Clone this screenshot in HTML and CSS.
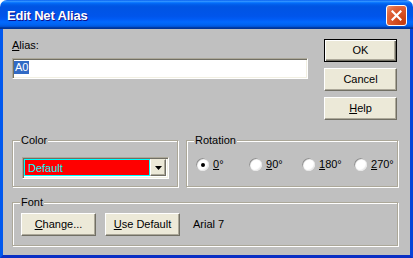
FILE: index.html
```html
<!DOCTYPE html>
<html lang="en">
<head>
    <meta charset="UTF-8">
    <title>Edit Net Alias</title>
    <link rel="stylesheet" href="styles.css">
</head>
<body>
    <div class="window">
        <div class="titlebar">
            <span class="title">Edit Net Alias</span>
            <button class="close" aria-label="Close">
                <svg width="11" height="11" viewBox="0 0 11 11">
                    <path d="M1.5 1.5 L9.5 9.5 M9.5 1.5 L1.5 9.5" stroke="#fff" stroke-width="2.2" stroke-linecap="square"/>
                </svg>
            </button>
        </div>

        <div class="client">
            <div class="top-row">
                <div class="alias">
                    <label class="alias-label"><u>A</u>lias:</label>
                    <div class="textbox"><span class="selected">A0</span></div>
                </div>
                <div class="actions">
                    <button class="btn btn-default">OK</button>
                    <button class="btn">Cancel</button>
                    <button class="btn"><u>H</u>elp</button>
                </div>
            </div>

            <div class="groups">
                <fieldset class="group color-group">
                    <legend>Color</legend>
                    <div class="group-body">
                        <div class="combo">
                            <div class="combo-field">Default</div>
                            <div class="combo-btn">
                                <svg width="7" height="4" viewBox="0 0 7 4"><path d="M0 0 H7 L3.5 4 Z" fill="#000"/></svg>
                            </div>
                        </div>
                    </div>
                </fieldset>

                <fieldset class="group rotation-group">
                    <legend>Rotation</legend>
                    <div class="group-body radios">
                        <label class="radio checked"><span class="dot"></span><span><u>0</u>°</span></label>
                        <label class="radio"><span class="dot"></span><span><u>9</u>0°</span></label>
                        <label class="radio"><span class="dot"></span><span><u>1</u>80°</span></label>
                        <label class="radio"><span class="dot"></span><span><u>2</u>70°</span></label>
                    </div>
                </fieldset>
            </div>

            <fieldset class="group font-group">
                <legend>Font</legend>
                <div class="group-body font-row">
                    <button class="btn btn-wide"><u>C</u>hange...</button>
                    <button class="btn btn-wide"><u>U</u>se Default</button>
                    <span class="font-name">Arial 7</span>
                </div>
            </fieldset>
        </div>
    </div>
</body>
</html>
```

FILE: styles.css
```css
* {
    margin: 0;
    padding: 0;
    box-sizing: border-box;
}

body {
    background: #fff;
    font-family: "Liberation Sans", Arial, sans-serif;
    font-size: 11px;
    line-height: 13px;
    color: #000;
}

u {
    text-decoration: underline;
    text-underline-offset: 1px;
}

.window {
    width: 413px;
    height: 258px;
    display: flex;
    flex-direction: column;
}

/* title bar */
.titlebar {
    height: 29px;
    flex: none;
    display: flex;
    align-items: center;
    justify-content: space-between;
    padding: 1px 6px 0 7px;
    border-radius: 7px 7px 0 0;
    background: linear-gradient(to bottom, #0058ee 0%, #3593ff 4%, #288eff 6%, #127dff 8%, #036ffc 10%, #0262ee 14%, #0057e5 20%, #0054e3 24%, #0055eb 56%, #005bf5 66%, #026afe 76%, #0062ef 86%, #0052d6 92%, #0040ab 94%, #003092 100%);
}

.title {
    color: #fff;
    font-weight: bold;
    font-size: 13px;
    letter-spacing: -0.2px;
    text-shadow: 1px 1px #0f1089;
}

.close {
    width: 21px;
    height: 21px;
    display: flex;
    align-items: center;
    justify-content: center;
    border: 1px solid #fff;
    border-radius: 3px;
    background: radial-gradient(circle at 85% 85%, #c53c0f 0%, #d9552a 50%, #e2693f 75%, #ee9a7c 100%);
}

/* client area */
.client {
    flex: 1;
    background: #c0c0c0;
    border: 3px solid #0844d8;
    border-top: 0;
    border-left-color: #0058ee;
    border-bottom-color: #0a2fc4;
    padding: 10px 12px 0 9px;
}

.top-row {
    display: flex;
    justify-content: space-between;
}

.alias {
    width: 296px;
}

.alias-label {
    display: block;
    height: 13px;
    margin-bottom: 6px;
}

.textbox {
    height: 21px;
    background: #fff;
    border: 1px solid;
    border-color: #aca899 #fff #fff #aca899;
    box-shadow: inset 1px 1px #716f64, inset -1px -1px #f1efe2;
    padding: 2px 0 0 1px;
}

.selected {
    display: inline-block;
    background: #316ac5;
    color: #fff;
    padding: 0 1px;
    height: 13px;
}

.actions {
    display: flex;
    flex-direction: column;
    gap: 6px;
    margin-right: 1px;
}

.btn {
    width: 73px;
    height: 23px;
    font: inherit;
    color: #000;
    background: #ece9d8;
    border: 1px solid;
    border-color: #fff #716f64 #716f64 #fff;
    box-shadow: inset -1px -1px #aca899;
}

.btn-default {
    border-color: #000;
    box-shadow: inset 1px 1px #fff, inset -1px -1px #716f64, inset -2px -2px #aca899;
}

.btn-wide {
    width: 75px;
}

/* group boxes */
.groups {
    display: flex;
    gap: 8px;
    margin-top: 14px;
}

.group {
    flex: none;
    min-width: 0;
    border: 1px solid #aca899;
    box-shadow: inset 1px 1px #fff, 1px 1px #fff;
    padding: 0;
}

.group legend {
    margin-left: 7px;
    padding: 0 1px;
    background: #c0c0c0;
    line-height: 13px;
}

.color-group {
    width: 166px;
    height: 53px;
}

.rotation-group {
    width: 212px;
    height: 53px;
}

.font-group {
    width: 386px;
    height: 50px;
    margin-top: 9px;
}

.group-body {
    padding: 10px 0 0 9px;
}

/* combo box */
.combo {
    width: 147px;
    height: 22px;
    display: flex;
    border: 1px solid;
    border-color: #aca899 #fff #fff #aca899;
    box-shadow: inset 1px 1px #716f64, inset -1px -1px #f1efe2;
    padding: 1px 2px 2px 1px;
    background: #fff;
}

.combo-field {
    flex: 1;
    background: #ff0000;
    border: 1px solid #00ffff;
    color: #00ffff;
    padding: 2px 0 0 3px;
}

.combo-btn {
    width: 16px;
    display: flex;
    align-items: center;
    justify-content: center;
    background: #ece9d8;
    border: 1px solid;
    border-color: #ece9d8 #716f64 #716f64 #fff;
    box-shadow: inset -1px -1px #aca899;
}

/* radios */
.radios {
    display: grid;
    grid-template-columns: 53px 53px 52px auto;
    padding-top: 11px;
}

.radio {
    display: flex;
    align-items: center;
    gap: 4px;
}

.dot {
    width: 13px;
    height: 13px;
    border-radius: 50%;
    background: #fff;
    box-shadow: inset 1px 1px 1px #8a8a8a, inset -1px -1px 1px #e8e8e8;
    display: flex;
    align-items: center;
    justify-content: center;
}

.radio.checked .dot::after {
    content: "";
    width: 4px;
    height: 4px;
    border-radius: 50%;
    background: #000;
}

/* font row */
.font-row {
    display: flex;
    align-items: center;
    gap: 9px;
    padding: 4px 0 0 8px;
}

.font-name {
    margin-left: 4px;
}
```
